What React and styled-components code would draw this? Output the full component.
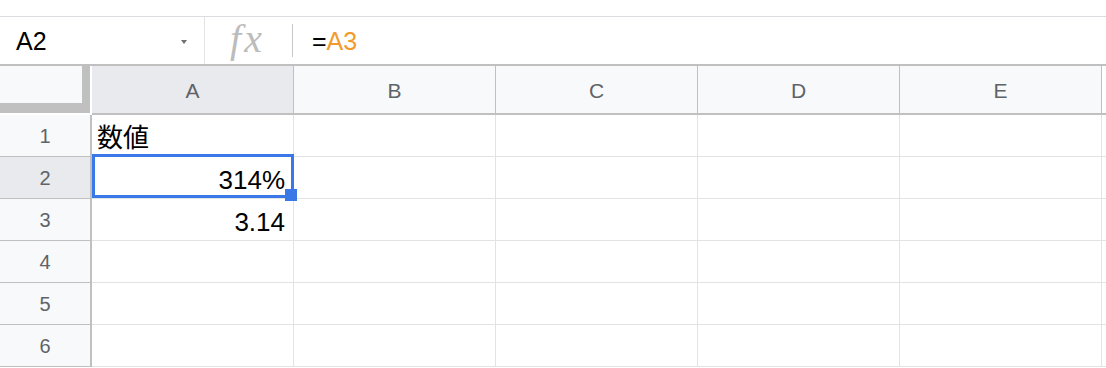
import React from 'react';
import styled, { createGlobalStyle } from 'styled-components';

const GlobalStyle = createGlobalStyle`
  html, body {
    margin: 0;
    padding: 0;
    background: #ffffff;
  }
  body {
    font-family: "Liberation Sans", Arial, "Noto Sans CJK JP", sans-serif;
    color: #000;
  }
`;

const header_line = '#c0c0c0';
const grid_line = '#e2e3e3';
const header_bg = '#f8f9fa';
const header_selected = '#e8eaed';

const Page = styled.div`
  width: 1106px;
  overflow: hidden;
`;

const TopStrip = styled.div`
  height: 16px;
  border-bottom: 1px solid #dadce0;
`;

const FormulaBar = styled.div`
  display: flex;
  align-items: center;
  height: 47px;
`;

const NameBox = styled.div`
  width: 204px;
  box-sizing: border-box;
  height: 100%;
  display: flex;
  align-items: center;
  justify-content: space-between;
  padding: 0 17px 0 16px;
  font-size: 25px;
  line-height: 28px;
`;

const Caret = styled.span`
  width: 0;
  height: 0;
  margin-top: 3px;
  border-left: 3.5px solid transparent;
  border-right: 3.5px solid transparent;
  border-top: 4px solid #707070;
`;

const Divider = styled.div`
  width: 1px;
  align-self: ${p => (p.full ? 'stretch' : 'center')};
  height: ${p => (p.full ? 'auto' : '33px')};
  background: ${p => (p.full ? '#e3e3e3' : '#c8c8c8')};
`;

const FxLabel = styled.div`
  width: 87px;
  text-align: center;
  font-family: "Liberation Serif", "Times New Roman", serif;
  font-style: italic;
  font-size: 40px;
  line-height: 40px;
  color: #bcbcbc;
  letter-spacing: 3px;
  margin-top: -4px;
  padding-right: 2px;
  box-sizing: border-box;
`;

const FormulaText = styled.div`
  padding-left: 19px;
  font-size: 25px;
  line-height: 28px;
`;

const Ref = styled.span`
  color: #f29b2c;
`;

const Sheet = styled.div`
  display: grid;
  grid-template-columns: 92px repeat(5, 202px) 1fr;
  grid-template-rows: 51px repeat(6, 42px);
`;

const Corner = styled.div`
  box-sizing: border-box;
  border-top: 2px solid ${header_line};
  padding: 0 2px 2px 0;
  display: flex;
`;

const CornerBox = styled.div`
  flex: 1;
  background: ${header_bg};
  border-right: 8px solid ${header_line};
  border-bottom: 10px solid ${header_line};
`;

const ColHeader = styled.div`
  box-sizing: border-box;
  border-top: 2px solid ${header_line};
  border-bottom: 2px solid ${header_line};
  border-right: ${p => (p.filler ? 'none' : `1px solid ${header_line}`)};
  background: ${p => (p.filler ? '#fff' : p.selected ? header_selected : header_bg)};
  display: flex;
  align-items: center;
  justify-content: center;
  padding-top: 3px;
  font-size: 21px;
  line-height: 24px;
  color: #5f6368;
`;

const RowHeader = styled.div`
  box-sizing: border-box;
  border-right: 2px solid ${header_line};
  border-bottom: 1px solid ${header_line};
  background: ${p => (p.selected ? header_selected : header_bg)};
  display: flex;
  align-items: center;
  justify-content: center;
  font-size: 20px;
  line-height: 24px;
  color: #5f6368;
`;

const Cell = styled.div`
  position: relative;
  box-sizing: border-box;
  border-right: ${p => (p.filler ? 'none' : `1px solid ${grid_line}`)};
  border-bottom: 1px solid ${grid_line};
  display: flex;
  align-items: center;
  justify-content: ${p => (p.align === 'right' ? 'flex-end' : 'flex-start')};
  padding: 4px 8px 0 5px;
  font-size: 26px;
  line-height: 30px;
  white-space: nowrap;
`;

const Selection = styled.div`
  position: absolute;
  z-index: 2;
  top: -3px;
  left: 0;
  right: -1px;
  bottom: 0;
  border: 3px solid #3b78e7;
  pointer-events: none;
`;

const FillHandle = styled.div`
  position: absolute;
  right: -6px;
  bottom: -6px;
  width: 12px;
  height: 12px;
  background: #3b78e7;
`;

const columns = ['A', 'B', 'C', 'D', 'E'];

const data = {
  1: { A: { text: '数値', align: 'left' } },
  2: { A: { text: '314%', align: 'right' } },
  3: { A: { text: '3.14', align: 'right' } },
};

const selected = { row: 2, col: 'A' };

export default function App() {
  const rows = [1, 2, 3, 4, 5, 6];
  return (
    <Page>
      <GlobalStyle />
      <TopStrip />
      <FormulaBar>
        <NameBox>
          A2
          <Caret />
        </NameBox>
        <Divider full />
        <FxLabel>fx</FxLabel>
        <Divider />
        <FormulaText>
          =<Ref>A3</Ref>
        </FormulaText>
      </FormulaBar>
      <Sheet>
        <Corner>
          <CornerBox />
        </Corner>
        {columns.map(c => (
          <ColHeader key={c} selected={c === selected.col}>
            {c}
          </ColHeader>
        ))}
        <ColHeader filler />
        {rows.map(r => (
          <React.Fragment key={r}>
            <RowHeader selected={r === selected.row}>{r}</RowHeader>
            {columns.map(c => {
              const cell = data[r] && data[r][c];
              const isSel = r === selected.row && c === selected.col;
              return (
                <Cell key={c} align={cell ? cell.align : 'left'}>
                  {cell ? cell.text : ''}
                  {isSel && (
                    <Selection>
                      <FillHandle />
                    </Selection>
                  )}
                </Cell>
              );
            })}
            <Cell filler />
          </React.Fragment>
        ))}
      </Sheet>
    </Page>
  );
}
